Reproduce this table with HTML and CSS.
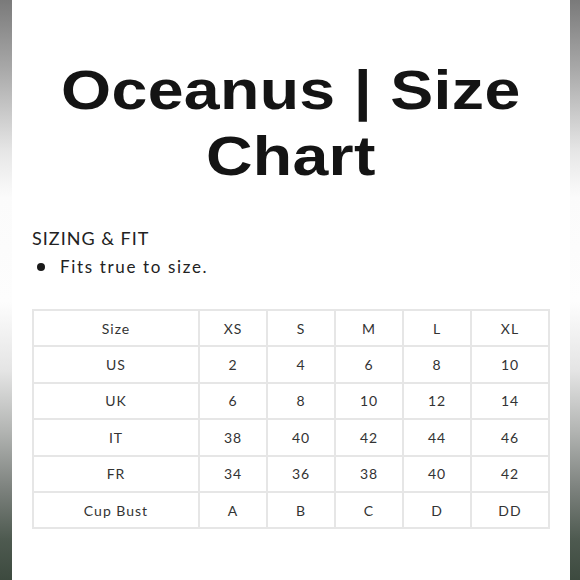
FILE: index.html
```html
<!DOCTYPE html>
<html>
<head>
<meta charset="utf-8">
<link rel="stylesheet" href="styles.css">
</head>
<body>
<div class="frame">
  <div class="edge"></div>
  <main class="sheet">
    <h1 class="title"><span class="title-line">Oceanus | Size</span><span class="title-line">Chart</span></h1>
    <section class="fit">
      <h2 class="fit-head">SIZING &amp; FIT</h2>
      <ul class="fit-list">
        <li>Fits true to size.</li>
      </ul>
    </section>
    <table class="chart">
      <colgroup>
        <col class="c-label"><col class="c-size"><col class="c-size"><col class="c-size"><col class="c-size"><col class="c-last">
      </colgroup>
      <tr><td>Size</td><td>XS</td><td>S</td><td>M</td><td>L</td><td>XL</td></tr>
      <tr><td>US</td><td>2</td><td>4</td><td>6</td><td>8</td><td>10</td></tr>
      <tr><td>UK</td><td>6</td><td>8</td><td>10</td><td>12</td><td>14</td></tr>
      <tr><td>IT</td><td>38</td><td>40</td><td>42</td><td>44</td><td>46</td></tr>
      <tr><td>FR</td><td>34</td><td>36</td><td>38</td><td>40</td><td>42</td></tr>
      <tr><td>Cup Bust</td><td>A</td><td>B</td><td>C</td><td>D</td><td>DD</td></tr>
    </table>
  </main>
  <div class="edge"></div>
</div>
</body>
</html>
```
FILE: styles.css
```css
* { box-sizing: border-box; }
html, body { margin: 0; padding: 0; background: #fff; }
.frame {
  display: flex;
  width: 580px;
  height: 580px;
}
.edge {
  width: 12px;
  flex: none;
  background: linear-gradient(to bottom,
    #7a7a7a 0%,
    #a9a9a9 12%,
    #e6e6e6 26%,
    #fbfbfb 34%,
    #fdfdfd 52%,
    #e4e4e4 64%,
    #b4b6b4 74%,
    #7e837f 84%,
    #4e5a50 93%,
    #3d4a3f 100%);
}
.sheet {
  flex: 1;
  padding: 57px 20px 0 20px;
  font-family: "Lato", "Noto Sans", sans-serif;
  color: #222;
}
.title {
  margin: 0;
  display: flex;
  flex-direction: column;
  align-items: center;
  font-family: "Liberation Sans", Arial, sans-serif;
  font-weight: 700;
  font-size: 56px;
  line-height: 66px;
  letter-spacing: 0.3px;
  color: #141414;
}
.title-line {
  display: block;
  white-space: nowrap;
  transform: scaleX(1.15);
}
.fit { margin-top: 38px; }
.fit-head {
  margin: 0;
  font-weight: 400;
  font-size: 18px;
  line-height: 22px;
  letter-spacing: 1px;
  color: #222;
}
.fit-list {
  list-style: none;
  margin: 7px 0 0 0;
  padding: 0;
  font-size: 17px;
  line-height: 22px;
  letter-spacing: 1.65px;
  color: #222;
}
.fit-list li {
  display: flex;
  align-items: center;
}
.fit-list li::before {
  content: "";
  width: 8px;
  height: 8px;
  border-radius: 50%;
  background: #1a1a1a;
  margin: 0 15px 0 5px;
  flex: none;
}
.chart {
  margin-top: 31px;
  border-collapse: collapse;
  width: 516px;
  table-layout: fixed;
  font-size: 14px;
  letter-spacing: 1px;
  color: #333;
}
.c-label { width: 166px; }
.c-size { width: 68px; }
.c-last { width: 78px; }
.chart td {
  border: 2px solid #e6e6e6;
  height: 36.4px;
  text-align: center;
  padding: 0;
}
```
